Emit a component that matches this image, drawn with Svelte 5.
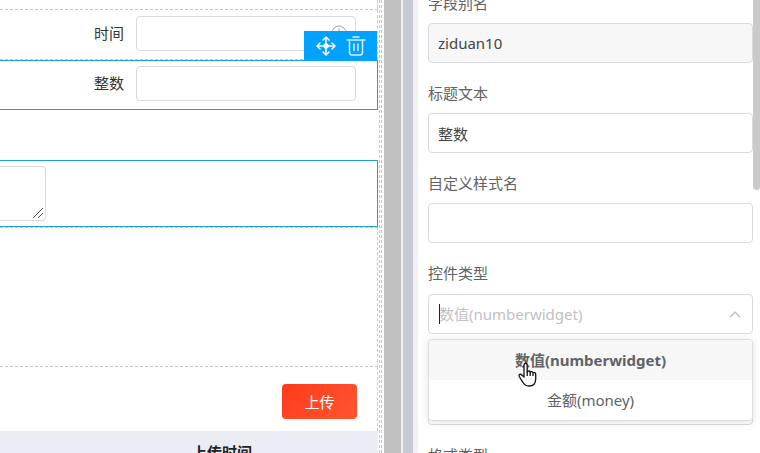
<script>
  let alias = $state('ziduan10');
  let title = $state('整数');
  let styleName = $state('');
  let keyword = $state('');
  let selected = $state('numberwidget');

  const options = [
    { value: 'numberwidget', text: '数值(numberwidget)' },
    { value: 'money', text: '金额(money)' }
  ];
</script>

<div class="page">
  <main class="designer">
    <div class="frame">
      <div class="canvas">
        <div class="row sliver"></div>
        <div class="row">
          <label for="time">时间</label>
          <div class="box">
            <input id="time" type="text" />
            <svg class="clock" viewBox="0 0 16 16" fill="none" stroke="#9a9ea4">
              <circle cx="8" cy="8" r="7" />
              <path d="M8 3.500V8h4" />
            </svg>
          </div>
        </div>
        <div class="row active">
          <label for="int">整数</label>
          <div class="box"><input id="int" type="text" /></div>
          <div class="tools">
            <button aria-label="移动">
              <svg viewBox="0 0 20 20" fill="none" stroke="#fff" stroke-width="1.500" stroke-linecap="round" stroke-linejoin="round">
                <path d="M10 1v18M1 10h18M7 4l3-3 3 3M7 16l3 3 3-3M4 7l-3 3 3 3M16 7l3 3-3 3" />
                <circle cx="10" cy="10" r="2" fill="#fff" />
              </svg>
            </button>
            <button aria-label="删除">
              <svg viewBox="0 0 20 20" fill="none" stroke="#d6efff" stroke-width="1.500" stroke-linecap="round" stroke-linejoin="round">
                <path d="M1 4h18M7 1h6M3.500 4v12.500q0 2.500 2.500 2.500h8q2.500 0 2.500-2.500V4M8 8v6.500M12 8v6.500" />
              </svg>
            </button>
          </div>
        </div>
        <div class="blank"></div>
        <div class="row active area">
          <div class="note">
            <textarea aria-label="备注"></textarea>
            <svg class="grip" viewBox="0 0 12 12" stroke="#555" stroke-width="1">
              <path d="M1 11L11 1M6 11l5-5" />
            </svg>
          </div>
        </div>
        <div class="drop"></div>
        <div class="actions"><button class="upload">上传</button></div>
        <table>
          <thead>
            <tr><th class="index"></th><th>上传时间</th></tr>
          </thead>
        </table>
      </div>
    </div>
  </main>
  <div class="track"></div>
  <div class="divider"></div>
  <aside class="panel">
    <form class="fields">
      <div class="field">
        <label for="alias">字段别名</label>
        <input id="alias" class="muted" type="text" readonly bind:value={alias} />
      </div>
      <div class="field">
        <label for="title">标题文本</label>
        <input id="title" type="text" bind:value={title} />
      </div>
      <div class="field">
        <label for="style">自定义样式名</label>
        <input id="style" type="text" bind:value={styleName} />
      </div>
      <div class="field picker">
        <label for="widget">控件类型</label>
        <div class="combo">
          <input id="widget" type="text" role="combobox" aria-expanded="true" aria-controls="widgets" placeholder="数值(numberwidget)" bind:value={keyword} />
          <span class="caret"></span>
          <svg class="arrow" viewBox="0 0 12 8" fill="none" stroke="#b4b8bf" stroke-width="1.200">
            <path d="M1 7l5-5 5 5" />
          </svg>
          <div id="widgets" class="menu" role="listbox">
            {#each options as o}
              <button type="button" role="option" aria-selected={o.value === selected} class:chosen={o.value === selected} onclick={() => (selected = o.value)}>{o.text}</button>
            {/each}
          </div>
          <svg class="pointer" viewBox="0 0 19 25" fill="#fff" stroke="#111" stroke-width="1.300" stroke-linejoin="round">
            <path d="M6 15V3.200C6 .6 9.200 .6 9.200 3.200V10c.3-1.500 2.900-1.300 3 .4.5-1.200 2.700-.9 2.800.7.700-1 2.700-.6 2.700 1.200V17c0 4.500-2.500 7-6.700 7-3.500 0-5-1.500-6.500-4.200L1.300 14.500c-.9-2 1.200-3 2.500-1.500z" />
            <path d="M9.200 10v4M12.200 10.500V14M15 11.500V14" fill="none" />
          </svg>
        </div>
      </div>
      <div class="field picker">
        <div class="covered"></div>
        <input type="text" aria-label="控件属性" />
      </div>
      <div class="field picker">
        <label for="format">格式类型</label>
        <input id="format" type="text" />
      </div>
    </form>
    <div class="scroll"><div class="thumb"></div></div>
  </aside>
</div>

<style>
  :global(body) {
    margin: 0;
    background: #fff;
  }
  .page,
  .page * {
    box-sizing: border-box;
  }
  .page {
    display: grid;
    grid-template-columns: minmax(0, 384fr) 17px 17px minmax(0, 342fr);
    grid-template-rows: 100%;
    height: 100vh;
    overflow: hidden;
    font: 15px/20px 'Noto Sans', 'Noto Sans CJK SC', sans-serif;
    color: #333;
  }
  input,
  textarea,
  button {
    font: inherit;
    color: inherit;
    margin: 0;
  }
  button {
    border: 0;
    padding: 0;
    background: none;
    cursor: pointer;
  }
  svg {
    display: block;
  }
  input,
  textarea {
    display: block;
    width: 100%;
    border: 1px solid #d8dadd;
    border-radius: 4px;
    background: #fff;
    outline: 0;
    padding: 0 9px;
  }

  .designer {
    padding-right: 2px;
  }
  .frame,
  .canvas {
    height: 100%;
    border-right: 1px dashed #c4c4c4;
    padding-right: 1px;
  }
  .row {
    position: relative;
    display: flex;
    align-items: flex-start;
    height: 50px;
    padding: 6px 21px 0 0;
    border-right: 1px dashed #ccc;
    border-bottom: 1px dashed #c8c8c8;
  }
  .row.sliver {
    height: 10px;
  }
  .row label {
    width: 136px;
    padding-right: 12px;
    line-height: 35px;
    text-align: right;
  }
  .box {
    position: relative;
    flex: 1;
  }
  .row input {
    height: 35px;
  }
  .clock {
    position: absolute;
    right: 9px;
    top: 9px;
    width: 16px;
    height: 16px;
  }
  .row.active {
    padding-top: 5px;
    border: 1px solid #1e9fd8;
    border-left: 0;
  }
  .tools {
    position: absolute;
    right: 0;
    bottom: 100%;
    display: flex;
    align-items: center;
    justify-content: center;
    gap: 10px;
    width: 73px;
    height: 30px;
    background: #00a2ff;
  }
  .tools svg {
    width: 20px;
    height: 20px;
  }
  .blank {
    height: 50px;
  }
  .row.area {
    height: 67px;
  }
  .note {
    position: relative;
    width: 46px;
  }
  textarea {
    height: 55px;
    border-left: 0;
    border-radius: 0 4px 4px 0;
    resize: none;
  }
  .grip {
    position: absolute;
    right: 2px;
    bottom: 2px;
    width: 12px;
    height: 12px;
  }
  .drop {
    height: 140px;
    border: 1px dashed #c8c8c8;
    border-left: 0;
  }
  .actions {
    display: flex;
    justify-content: flex-end;
    padding: 17px 20px 12px;
    border-right: 1px dashed #ccc;
  }
  .upload {
    width: 75px;
    height: 35px;
    border-radius: 4px;
    color: #fff;
    background: linear-gradient(135deg, #ff3a1c, #ff5730);
  }
  table {
    width: 100%;
    border-collapse: collapse;
    background: #ecedf4;
  }
  th {
    height: 42px;
    padding: 0;
    font-weight: 700;
    color: #222;
  }
  th.index {
    width: 66px;
  }

  .track {
    background: #c1c1c1;
  }
  .divider {
    background: #c4cad0;
    border-left: 2px solid #eff1f5;
    border-right: 5px solid #eff1f6;
  }

  .panel {
    display: flex;
    padding-left: 10px;
    color: #606266;
  }
  .fields {
    flex: 1;
    min-width: 0;
    margin-top: -17px;
  }
  .field {
    margin-bottom: 10px;
  }
  .field label,
  .covered {
    display: block;
    height: 40px;
    line-height: 40px;
  }
  .picker label,
  .covered {
    height: 41px;
  }
  .field input {
    height: 40px;
    color: #444;
  }
  .field .muted {
    background: #f7f7f7;
  }
  .combo {
    position: relative;
  }
  .combo input {
    padding: 0 10px;
  }
  .combo input::placeholder {
    color: #bfc1c5;
    opacity: 1;
  }
  .caret {
    position: absolute;
    left: 11px;
    top: 10px;
    width: 1px;
    height: 20px;
    background: #222;
  }
  .arrow {
    position: absolute;
    right: 12px;
    top: 16px;
    width: 12px;
    height: 8px;
  }
  .menu {
    position: absolute;
    z-index: 1;
    top: 45px;
    left: 0;
    right: 0;
    overflow: hidden;
    border: 1px solid #dcdee0;
    border-radius: 4px;
    background: #fff;
    box-shadow: 0 1px 8px rgba(0, 0, 0, 0.12);
  }
  .menu button {
    display: block;
    width: 100%;
    height: 40px;
    text-align: center;
  }
  .menu .chosen {
    background: #f7f7f7;
    font-weight: 700;
  }
  .pointer {
    position: absolute;
    z-index: 2;
    left: 90px;
    top: 68px;
    width: 19px;
    height: 25px;
  }
  .scroll {
    width: 7px;
    flex: none;
  }
  .thumb {
    height: 42%;
    background: #c9c9c9;
    border-radius: 0 0 4px 4px;
  }
</style>
